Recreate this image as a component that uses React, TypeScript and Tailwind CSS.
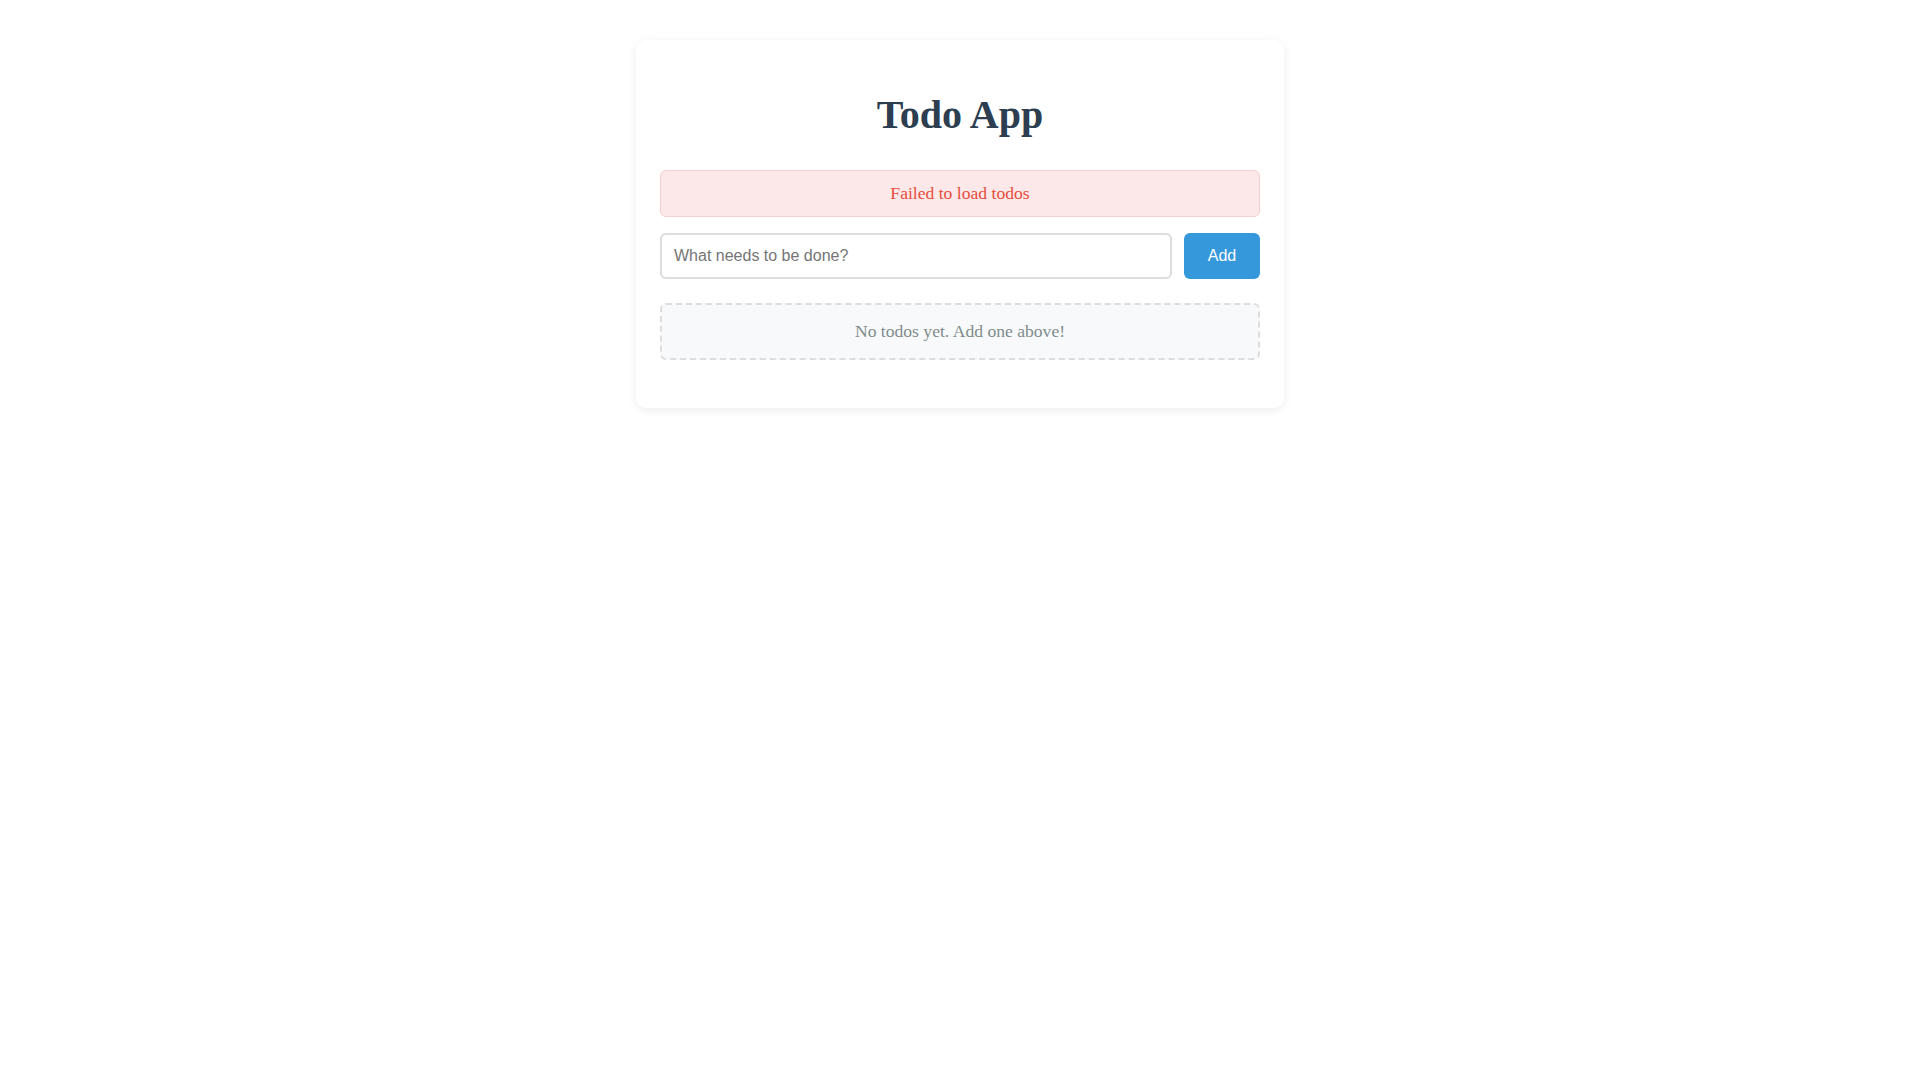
import React from "react";

export default function App() {
  return (
    <div className="min-h-screen w-full bg-white" style={{ fontFamily: '"Liberation Serif", "Times New Roman", serif' }}>
      <div className="mx-auto mt-[40px] w-[648px] rounded-[10px] bg-white px-[24px] pt-[24px] pb-[48px] shadow-[0_2px_10px_rgba(0,0,0,0.08)]">
        <h1
          className="mt-[28px] mb-[32px] text-center text-[40px] font-bold leading-[46px] text-[#2c3e50]"
          style={{ fontFamily: '"Liberation Serif", "Times New Roman", serif' }}
        >
          Todo App
        </h1>
        <div className="flex h-[47px] items-center justify-center rounded-[6px] border border-[#f8cfcf] bg-[#fce8e8] text-[17.6px] text-[#e74c3c]">
          Failed to load todos
        </div>
        <div className="mt-[16px] flex gap-[12px]">
          <input
            type="text"
            placeholder="What needs to be done?"
            className="h-[46px] flex-1 rounded-[6px] border-2 border-[#dddddd] bg-white px-[12px] text-[16px] text-[#333] placeholder:text-[#757575] outline-none"
            style={{ fontFamily: '"Liberation Sans", Arial, sans-serif' }}
          />
          <button
            className="h-[46px] w-[76px] rounded-[6px] bg-[#3498db] text-[16px] text-white"
            style={{ fontFamily: '"Liberation Sans", Arial, sans-serif' }}
          >
            Add
          </button>
        </div>
        <div className="mt-[24px] flex h-[57px] items-center justify-center rounded-[6px] border-2 border-dashed border-[#dddddd] bg-[#f8f9fa] text-[17.6px] text-[#7f8c8d]">
          No todos yet. Add one above!
        </div>
      </div>
    </div>
  );
}
